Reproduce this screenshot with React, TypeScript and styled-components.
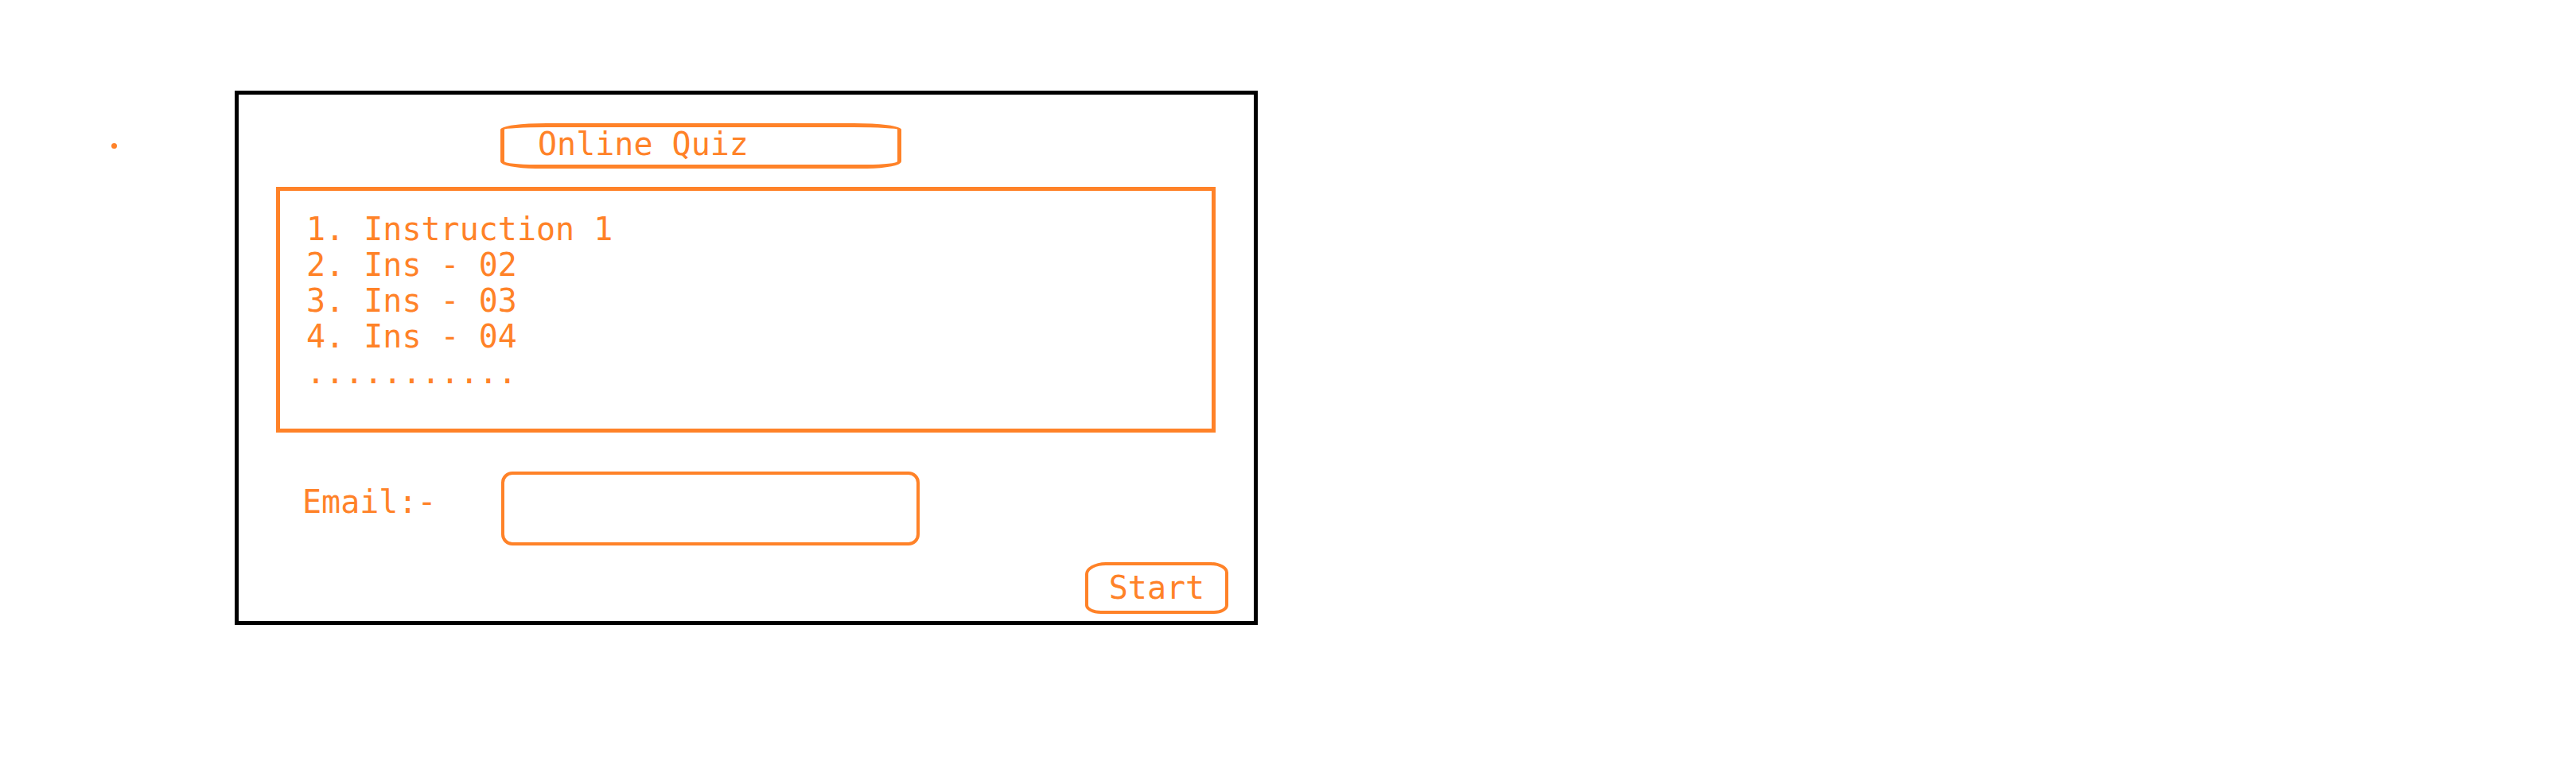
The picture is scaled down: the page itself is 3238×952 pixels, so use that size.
import React from "react";
import styled, { createGlobalStyle } from "styled-components";

const ORANGE = "#ff8228";

const GlobalStyle = createGlobalStyle`
  html, body {
    margin: 0;
    padding: 0;
    background: #ffffff;
  }
  *, *::before, *::after {
    box-sizing: border-box;
  }
  body {
    font-family: "DejaVu Sans Mono", "Liberation Mono", monospace;
    color: ${ORANGE};
  }
`;

const Page = styled.div`
  display: flex;
  align-items: flex-start;
  padding: 114px 0 0 140px;
  width: 3238px;
  height: 952px;
`;

const Dot = styled.span`
  display: block;
  width: 7px;
  height: 7px;
  margin-top: 66px;
  border-radius: 50%;
  background: ${ORANGE};
  flex: none;
`;

const Frame = styled.section`
  display: flex;
  flex-direction: column;
  width: 1286px;
  height: 672px;
  margin-left: 148px;
  border: 5px solid #000000;
  padding: 36px 0 9px 0;
`;

const TitlePill = styled.h1`
  margin: 0 0 23px 329px;
  width: 504px;
  height: 57px;
  border: 5px solid ${ORANGE};
  border-radius: 58px 60px 43px 44px / 8px 8px 9px 9px;
  padding: 0 0 0 42px;
  font-size: 40px;
  font-weight: normal;
  line-height: 43px;
  white-space: pre;
`;

const InstructionBox = styled.ol`
  list-style: none;
  margin: 0 0 0 47px;
  width: 1181px;
  height: 309px;
  border: 5px solid ${ORANGE};
  padding: 26px 0 0 33px;
  font-size: 40px;
  line-height: 45px;
`;

const Instruction = styled.li`
  white-space: pre;
`;

const EmailRow = styled.div`
  display: grid;
  grid-template-columns: 250px 526px;
  align-items: start;
  margin-top: 49px;
  padding-left: 80px;
`;

const EmailLabel = styled.label`
  padding-top: 16px;
  font-size: 40px;
  line-height: 45px;
  white-space: pre;
`;

const EmailInput = styled.input`
  width: 526px;
  height: 93px;
  border: 4px solid ${ORANGE};
  border-radius: 14px;
  background: transparent;
  outline: none;
  padding: 0 16px;
  font-family: "DejaVu Sans Mono", monospace;
  font-size: 32px;
  color: ${ORANGE};
`;

const Actions = styled.div`
  display: flex;
  justify-content: flex-end;
  margin-top: 21px;
  padding-right: 32px;
`;

const StartButton = styled.button`
  display: flex;
  align-items: center;
  justify-content: center;
  width: 180px;
  height: 65px;
  border: 4px solid ${ORANGE};
  border-radius: 26px 22px 18px 20px / 15px 13px 11px 11px;
  background: transparent;
  padding: 0;
  font-family: "DejaVu Sans Mono", monospace;
  font-size: 40px;
  line-height: 45px;
  color: ${ORANGE};
  cursor: pointer;
`;

const instructions = [
  "1. Instruction 1",
  "2. Ins - 02",
  "3. Ins - 03",
  "4. Ins - 04",
  "...........",
];

export default function App() {
  return (
    <>
      <GlobalStyle />
      <Page>
        <Dot />
        <Frame>
          <TitlePill>Online Quiz</TitlePill>
          <InstructionBox>
            {instructions.map((text) => (
              <Instruction key={text}>{text}</Instruction>
            ))}
          </InstructionBox>
          <EmailRow>
            <EmailLabel htmlFor="email">Email:-</EmailLabel>
            <EmailInput id="email" type="email" />
          </EmailRow>
          <Actions>
            <StartButton type="button">Start</StartButton>
          </Actions>
        </Frame>
      </Page>
    </>
  );
}
